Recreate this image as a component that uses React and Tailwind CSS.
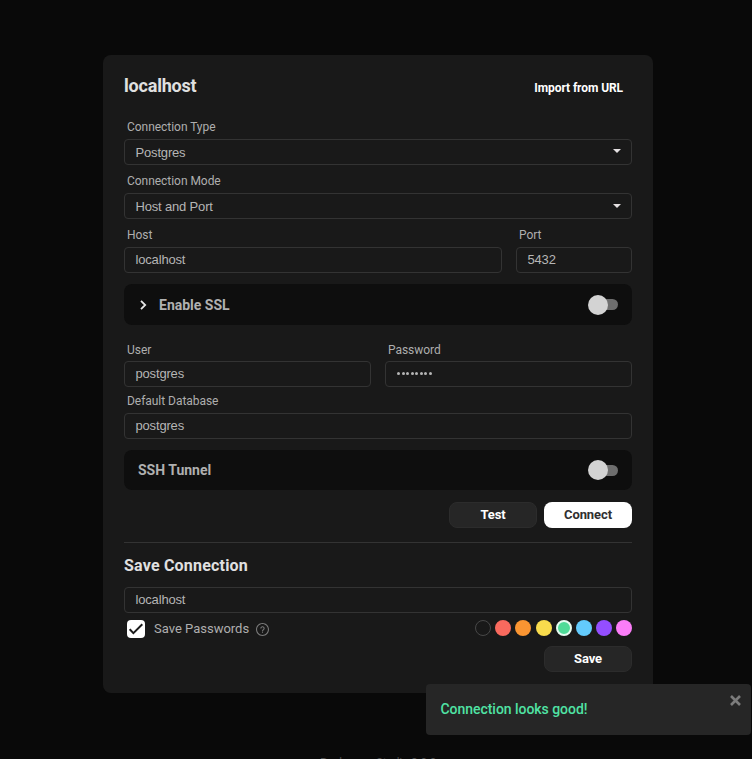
const swatches = [
  { name: 'none', cls: 'border border-[#484848]' },
  { name: 'red', cls: 'bg-[#f96a5e]' },
  { name: 'orange', cls: 'bg-[#fa9532] mr-px' },
  { name: 'yellow', cls: 'bg-[#f9dc4d]' },
  { name: 'green', cls: 'bg-[#4fdb98] border-2 border-[#e6fbf1]' },
  { name: 'blue', cls: 'bg-[#63cbfd]' },
  { name: 'purple', cls: 'bg-[#944eff]' },
  { name: 'pink', cls: 'bg-[#fb7df8]' },
];

function Label({ children, className = 'mt-1' }) {
  return (
    <div className={`flex h-6 items-center pl-[3px] text-[12px] tracking-[-0.04px] text-[#aeaeae] ${className}`}>
      {children}
    </div>
  );
}

function Field({ children, caret = false, caretClass = '' }) {
  return (
    <div className="flex h-[26px] items-center justify-between rounded-[4px] border border-[#333333] pl-[10.5px] pr-[10px] font-['Liberation_Sans',sans-serif] text-[13px] tracking-[-0.17px] text-[#b5b5b5]">
      {children}
      {caret && (
        <svg width="8" height="4" viewBox="0 0 8 4" className={caretClass}>
          <path d="M0 0h8L4 4z" fill="#e4e0e2" />
        </svg>
      )}
    </div>
  );
}

function Toggle() {
  return (
    <div className="flex items-center">
      <div className="z-10 size-5 rounded-full bg-[#d3d3d3]" />
      <div className="-ml-4 h-[11px] w-[26px] rounded-full bg-[#6e6e6e]" />
    </div>
  );
}

function Button({ children, primary = false }) {
  const tone = primary
    ? 'bg-white text-[#303030]'
    : 'border border-[#2c2c2c] bg-[#262626] text-white';
  return (
    <button className={`flex h-[26px] w-[88px] items-center justify-center rounded-[8px] pb-[2px] text-[13px] font-bold leading-none tracking-[-0.08px] ${tone}`}>
      {children}
    </button>
  );
}

export default function App() {
  return (
    <div className="relative flex h-[759px] w-[752px] flex-col overflow-hidden bg-[#090909] pl-[103px] pt-[55px] font-['Roboto',sans-serif]">
      <main className="h-[638px] w-[550px] shrink-0 rounded-[8px] bg-[#191919] px-[21px] pt-[19px]">
        <header className="flex h-[41px] justify-between">
          <h1 className="text-[18px] font-bold leading-6 tracking-[-0.2px] text-[#e0e0e0]">localhost</h1>
          <span className="pr-[9px] pt-[5px] text-[12px] font-bold leading-[18px] tracking-[-0.08px] text-white">Import from URL</span>
        </header>

        <Label className="">Connection Type</Label>
        <Field caret caretClass="mb-[2px]"><span className="pt-[2px]">Postgres</span></Field>
        <Label>Connection Mode</Label>
        <Field caret><span className="pt-[2px]">Host and Port</span></Field>

        <div className="flex gap-[14px]">
          <div className="w-[378px]">
            <Label>Host</Label>
            <Field>localhost</Field>
          </div>
          <div className="flex-1">
            <Label>Port</Label>
            <Field>5432</Field>
          </div>
        </div>

        <section className="mt-[11px] flex h-[41px] items-center justify-between rounded-[8px] bg-[#0e0e0e] pl-[16px] pr-[14px]">
          <div className="flex items-center text-[14px] font-bold text-[#b0b0b0]">
            <svg width="7" height="10" viewBox="0 0 7 10" fill="none" stroke="#e6e6e6" strokeWidth="1.8">
              <path d="M1 .8 5.2 5 1 9.2" />
            </svg>
            <span className="ml-[12px] pt-[2px]">Enable SSL</span>
          </div>
          <Toggle />
        </section>

        <div className="flex gap-[14px]">
          <div className="flex-1">
            <Label className="mt-3 pt-[2px]">User</Label>
            <Field>postgres</Field>
          </div>
          <div className="flex-1">
            <Label className="mt-3 pt-[2px]">Password</Label>
            <Field>
              <span className="flex gap-[1.5px] pb-px pl-[0.5px]">
                {Array.from({ length: 8 }, (_, i) => (
                  <span key={i} className="size-[3px] rounded-full bg-[#b5b5b5]" />
                ))}
              </span>
            </Field>
          </div>
        </div>
        <Label className="mt-[2px]">Default Database</Label>
        <Field>postgres</Field>

        <section className="mt-[11px] flex h-10 items-center justify-between rounded-[8px] bg-[#0e0e0e] px-[14px]">
          <span className="text-[14px] font-bold text-[#b0b0b0]">SSH Tunnel</span>
          <Toggle />
        </section>

        <div className="mt-3 flex justify-end gap-[7px]">
          <Button>Test</Button>
          <Button primary>Connect</Button>
        </div>

        <section className="mt-[14px] border-t border-[#333333] pt-[11px]">
          <h2 className="h-[33px] text-[16px] font-bold leading-6 tracking-[0.2px] text-[#e0e0e0]">Save Connection</h2>
          <Field>localhost</Field>
          <div className="mt-[7px] flex justify-between">
            <div className="flex h-[18px] items-center pl-[3px] text-[13px] text-[#aeaeae]">
              <span className="flex size-[18px] items-center justify-center rounded-[4px] bg-white">
                <svg width="14" height="12" viewBox="0 0 14 12" fill="none" stroke="#1c1c1c" strokeWidth="2">
                  <path d="m.7 6.2 3.7 3.9 8.9-8.8" />
                </svg>
              </span>
              <span className="ml-[9px]">Save Passwords</span>
              <svg className="ml-[7px]" width="13" height="13" viewBox="0 0 24 24" fill="#7b7b7b">
                <path d="M11 18h2v-2h-2v2zm1-18C5.4 0 0 5.4 0 12s5.4 12 12 12 12-5.4 12-12S18.600 0 12 0zm0 22C6.500 22 2 17.500 2 12S6.500 2 12 2s10 4.500 10 10-4.500 10-10 10zm0-16c-2.210 0-4 1.790-4 4h2c0-1.100.9-2 2-2s2 .9 2 2c0 2-3 1.750-3 5h2c0-2.250 3-2.500 3-5 0-2.210-1.790-4-4-4z" />
              </svg>
            </div>
            <div className="flex gap-1">
              {swatches.map((s) => (
                <span key={s.name} className={`size-4 rounded-full ${s.cls}`} />
              ))}
            </div>
          </div>
          <div className="mt-2 flex justify-end">
            <Button>Save</Button>
          </div>
        </section>
      </main>

      <footer className="ml-[217px] mt-[61px] whitespace-nowrap text-[12px] leading-[18px] tracking-[-0.3px] text-[#4c4c4c]">
        Beekeeper Studio 3.9.9
      </footer>

      <aside className="absolute left-[426px] top-[684px] flex h-[51px] w-[325px] items-center justify-between rounded-[4px] bg-[#262626] pl-[14.5px] pr-[10px]">
        <span className="text-[14px] font-medium tracking-[-0.04px] text-[#50e3a4]">Connection looks good!</span>
        <svg className="mb-[19px]" width="11" height="11" viewBox="0 0 11 11" stroke="#7c7c7c" strokeWidth="2.600">
          <path d="m1 1 9 9M10 1l-9 9" />
        </svg>
      </aside>
    </div>
  );
}
